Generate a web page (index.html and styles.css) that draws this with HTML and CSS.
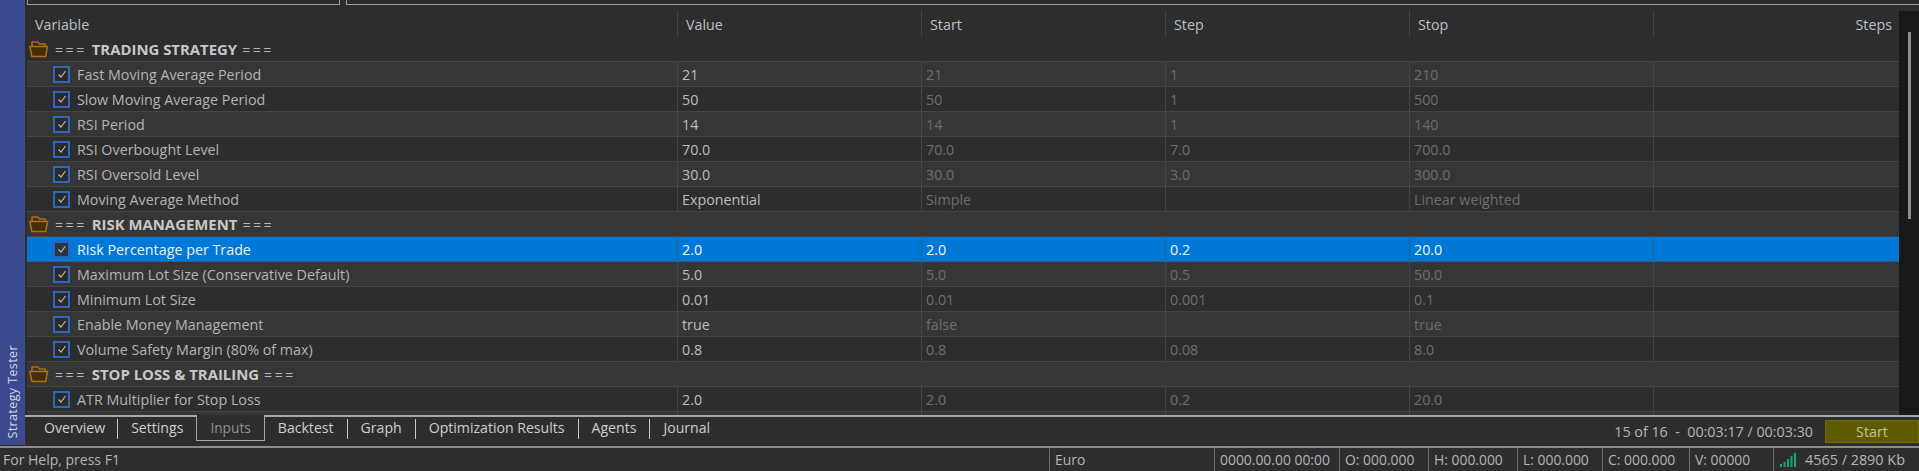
FILE: index.html
```html
<!DOCTYPE html>
<html lang="en">
<head>
<meta charset="utf-8">
<title>Strategy Tester</title>
<link rel="stylesheet" href="styles.css">
</head>
<body>
<div class="app">
  <div class="main">
    <aside class="rail"><span class="rail-label">Strategy Tester</span></aside>
    <div class="panel">
      <div class="filters">
        <div class="filter filter-a"></div>
        <div class="filter filter-b"></div>
      </div>
      <div class="body">
        <div class="table">
          <div class="head">
            <div class="hc hc-first">Variable</div>
            <div class="hc">Value</div>
            <div class="hc">Start</div>
            <div class="hc">Step</div>
            <div class="hc">Stop</div>
            <div class="hc hc-last">Steps</div>
          </div>
          <div class="rows">
            <div class="row group"><svg class="folder" viewBox="0 0 20 18"><path d="M3 6V2h6l1.500 2H16v2" fill="none" stroke="#b0700f" stroke-width="1.500"/><path d="M1 6.500h17.500l-1.800 10H2.800z" fill="#432f07" stroke="#b0700f" stroke-width="1.500"/></svg><span class="eq">===</span><b>TRADING STRATEGY</b><span class="eq">===</span></div>
            <div class="row param"><div class="c c-name"><span class="check"><svg viewBox="0 0 10 10"><path d="M1.500 5.500l2.500 2.500 4.500-6" fill="none" stroke="#b5b5b5" stroke-width="1.200"/></svg></span>Fast Moving Average Period</div><div class="c c-val">21</div><div class="c">21</div><div class="c">1</div><div class="c">210</div><div class="c"></div></div>
            <div class="row param"><div class="c c-name"><span class="check"><svg viewBox="0 0 10 10"><path d="M1.500 5.500l2.500 2.500 4.500-6" fill="none" stroke="#b5b5b5" stroke-width="1.200"/></svg></span>Slow Moving Average Period</div><div class="c c-val">50</div><div class="c">50</div><div class="c">1</div><div class="c">500</div><div class="c"></div></div>
            <div class="row param"><div class="c c-name"><span class="check"><svg viewBox="0 0 10 10"><path d="M1.500 5.500l2.500 2.500 4.500-6" fill="none" stroke="#b5b5b5" stroke-width="1.200"/></svg></span>RSI Period</div><div class="c c-val">14</div><div class="c">14</div><div class="c">1</div><div class="c">140</div><div class="c"></div></div>
            <div class="row param"><div class="c c-name"><span class="check"><svg viewBox="0 0 10 10"><path d="M1.500 5.500l2.500 2.500 4.500-6" fill="none" stroke="#b5b5b5" stroke-width="1.200"/></svg></span>RSI Overbought Level</div><div class="c c-val">70.0</div><div class="c">70.0</div><div class="c">7.0</div><div class="c">700.0</div><div class="c"></div></div>
            <div class="row param"><div class="c c-name"><span class="check"><svg viewBox="0 0 10 10"><path d="M1.500 5.500l2.500 2.500 4.500-6" fill="none" stroke="#b5b5b5" stroke-width="1.200"/></svg></span>RSI Oversold Level</div><div class="c c-val">30.0</div><div class="c">30.0</div><div class="c">3.0</div><div class="c">300.0</div><div class="c"></div></div>
            <div class="row param"><div class="c c-name"><span class="check"><svg viewBox="0 0 10 10"><path d="M1.500 5.500l2.500 2.500 4.500-6" fill="none" stroke="#b5b5b5" stroke-width="1.200"/></svg></span>Moving Average Method</div><div class="c c-val">Exponential</div><div class="c">Simple</div><div class="c"></div><div class="c">Linear weighted</div><div class="c"></div></div>
            <div class="row group"><svg class="folder" viewBox="0 0 20 18"><path d="M3 6V2h6l1.500 2H16v2" fill="none" stroke="#b0700f" stroke-width="1.500"/><path d="M1 6.500h17.500l-1.800 10H2.800z" fill="#432f07" stroke="#b0700f" stroke-width="1.500"/></svg><span class="eq">===</span><b>RISK MANAGEMENT</b><span class="eq">===</span></div>
            <div class="row param selected"><div class="c c-name"><span class="check"><svg viewBox="0 0 10 10"><path d="M1.500 5.500l2.500 2.500 4.500-6" fill="none" stroke="#b5b5b5" stroke-width="1.200"/></svg></span>Risk Percentage per Trade</div><div class="c c-val">2.0</div><div class="c">2.0</div><div class="c">0.2</div><div class="c">20.0</div><div class="c"></div></div>
            <div class="row param"><div class="c c-name"><span class="check"><svg viewBox="0 0 10 10"><path d="M1.500 5.500l2.500 2.500 4.500-6" fill="none" stroke="#b5b5b5" stroke-width="1.200"/></svg></span>Maximum Lot Size (Conservative Default)</div><div class="c c-val">5.0</div><div class="c">5.0</div><div class="c">0.5</div><div class="c">50.0</div><div class="c"></div></div>
            <div class="row param"><div class="c c-name"><span class="check"><svg viewBox="0 0 10 10"><path d="M1.500 5.500l2.500 2.500 4.500-6" fill="none" stroke="#b5b5b5" stroke-width="1.200"/></svg></span>Minimum Lot Size</div><div class="c c-val">0.01</div><div class="c">0.01</div><div class="c">0.001</div><div class="c">0.1</div><div class="c"></div></div>
            <div class="row param"><div class="c c-name"><span class="check"><svg viewBox="0 0 10 10"><path d="M1.500 5.500l2.500 2.500 4.500-6" fill="none" stroke="#b5b5b5" stroke-width="1.200"/></svg></span>Enable Money Management</div><div class="c c-val">true</div><div class="c">false</div><div class="c"></div><div class="c">true</div><div class="c"></div></div>
            <div class="row param"><div class="c c-name"><span class="check"><svg viewBox="0 0 10 10"><path d="M1.500 5.500l2.500 2.500 4.500-6" fill="none" stroke="#b5b5b5" stroke-width="1.200"/></svg></span>Volume Safety Margin (80% of max)</div><div class="c c-val">0.8</div><div class="c">0.8</div><div class="c">0.08</div><div class="c">8.0</div><div class="c"></div></div>
            <div class="row group"><svg class="folder" viewBox="0 0 20 18"><path d="M3 6V2h6l1.500 2H16v2" fill="none" stroke="#b0700f" stroke-width="1.500"/><path d="M1 6.500h17.500l-1.800 10H2.800z" fill="#432f07" stroke="#b0700f" stroke-width="1.500"/></svg><span class="eq">===</span><b>STOP LOSS &amp; TRAILING</b><span class="eq">===</span></div>
            <div class="row param"><div class="c c-name"><span class="check"><svg viewBox="0 0 10 10"><path d="M1.500 5.500l2.500 2.500 4.500-6" fill="none" stroke="#b5b5b5" stroke-width="1.200"/></svg></span>ATR Multiplier for Stop Loss</div><div class="c c-val">2.0</div><div class="c">2.0</div><div class="c">0.2</div><div class="c">20.0</div><div class="c"></div></div>
            <div class="row param"><div class="c c-name"></div><div class="c"></div><div class="c"></div><div class="c"></div><div class="c"></div><div class="c"></div></div>
          </div>
        </div>
        <div class="scrollbar"><div class="thumb"></div></div>
      </div>
      <div class="tabbar">
        <nav class="tabs">
          <span class="tab">Overview</span>
          <span class="tab">Settings</span>
          <span class="tab tab-active">Inputs</span>
          <span class="tab">Backtest</span>
          <span class="tab">Graph</span>
          <span class="tab">Optimization Results</span>
          <span class="tab">Agents</span>
          <span class="tab tab-end">Journal</span>
        </nav>
        <div class="progress">15 of 16&nbsp; -&nbsp; 00:03:17 / 00:03:30</div>
        <button class="start" type="button">Start</button>
      </div>
    </div>
  </div>
  <footer class="status">
    <div class="s s-help">For Help, press F1</div>
    <div class="s s-euro">Euro</div>
    <div class="s s-date">0000.00.00 00:00</div>
    <div class="s s-o">O: 000.000</div>
    <div class="s s-o">H: 000.000</div>
    <div class="s s-l">L: 000.000</div>
    <div class="s s-c">C: 000.000</div>
    <div class="s s-v">V: 00000</div>
    <div class="s s-net"><svg class="bars" viewBox="0 0 18 14"><path d="M1 14v-3M4.500 14v-5M8 14V6M11.500 14V3M15 14V0" stroke="#12a86b" stroke-width="2" fill="none"/></svg>4565 / 2890 Kb</div>
  </footer>
</div>
</body>
</html>
```
FILE: styles.css
```css
* { box-sizing: border-box; }
html, body { margin: 0; padding: 0; background: #2d2d2d; }
body { font-family: "Open Sans", "Noto Sans", sans-serif; font-size: 14.3px; color: #c4c4c4; overflow: hidden; }
.app { width: 1919px; height: 471px; display: flex; flex-direction: column; overflow: hidden; }
.main { height: 446px; display: flex; }
.rail { width: 25px; height: 445px; background: #3b4a8f; display: flex; align-items: flex-end; justify-content: center; padding-bottom: 6px; flex: none; }
.rail-label { writing-mode: vertical-rl; transform: rotate(180deg); color: #d5d8e8; font-size: 12.5px; letter-spacing: .4px; }
.panel { flex: 1; display: flex; flex-direction: column; min-width: 0; }
.filters { height: 5px; display: flex; gap: 6px; padding-left: 2px; overflow: hidden; flex: none; }
.filter { height: 5px; border: 1px solid #a0a0a0; border-top: 0; }
.filter-a { width: 313px; }
.filter-b { flex: 1; border-right: 0; }
.body { height: 410px; display: flex; flex: none; }
.table { width: 1874px; padding-left: 2px; overflow: hidden; flex: none; }
.head { height: 32px; display: grid; grid-template-columns: 650px 244px 244px 244px 244px 246px; padding-top: 6px; color: #b9c0c8; }
.hc { height: 25px; line-height: 28px; padding-left: 8px; border-left: 1px solid #444; }
.hc-first { border-left: 0; padding-left: 8px; }
.hc-last { text-align: right; padding-right: 7px; padding-left: 0; }
.rows { height: 378px; overflow: hidden; }
.row { height: 25px; border-bottom: 1px solid #454545; background: #2d2d2d; }
.row:nth-child(even) { background: #363636; }
.group { display: flex; align-items: center; padding-left: 2px; color: #b4b4b4; }
.group b { color: #c8c8c8; font-size: 14.9px; font-weight: 700; margin: 0 5px; white-space: nowrap; }
.eq { letter-spacing: 2.4px; }
.folder { width: 20px; height: 18px; margin-right: 6px; flex: none; }
.param { display: grid; grid-template-columns: 650px 244px 244px 244px 244px 246px; color: #6d6d6d; }
.c { line-height: 25px; padding-left: 4px; border-left: 1px solid #454545; overflow: hidden; white-space: nowrap; }
.c-name { border-left: 0; padding-left: 26px; color: #b4b4b4; display: flex; align-items: center; gap: 7px; }
.c-val { color: #bdbdbd; }
.check { width: 17px; height: 17px; border: 2px solid #2c68c2; background: #2b2b2b; display: flex; align-items: center; justify-content: center; flex: none; }
.check svg { width: 10px; height: 10px; }
.selected { background: #0078d7 !important; color: #f2f2f2; border-bottom-color: #3a5c80; }
.selected .c { color: #f4f4f4; border-left-color: #2a5f8f; }
.selected .c-name { color: #f0f0f0; }
.selected .check { background: #2d3340; border-color: #2c62c0; }
.scrollbar { flex: 1; background: #181818; margin-top: 6px; padding-top: 21px; padding-left: 9px; }
.thumb { width: 3px; height: 187px; background: #8c8c8c; }
.tabbar { height: 31px; display: flex; align-items: center; border-top: 2px solid #a8a8a8; flex: none; }
.tabs { display: flex; flex: 1; height: 29px; align-items: flex-start; padding-left: 5px; font-size: 14.1px; }
.tab { height: 20px; margin-top: 2px; padding: 0 13px; line-height: 18px; border-right: 1px solid #c8c8c8; color: #cfcfcf; }
.tab:first-child { padding-left: 14px; padding-right: 12px; }
.tab-end { border-right: 0; }
.tab-active { height: 26px; margin-top: -2px; padding-top: 4px; background: #2d2d2d; border: 1px solid #a8a8a8; border-top: 0; color: #8e9296; margin-left: -1px; font-size: 13.7px; }
.progress { margin-right: 12px; color: #b6b6b6; }
.start { width: 94px; height: 23px; background: #5e5a00; border: 1px solid #736f05; color: #c6c29a; font: inherit; padding: 0; }
.status { height: 25px; display: flex; border-top: 2px solid #8c8c8c; background: #2d2d2d; color: #b6b6b6; font-size: 13.9px; flex: none; }
.s { padding-left: 5px; border-left: 1px solid #6a6a6a; line-height: 24px; white-space: nowrap; flex: none; }
.s-help { width: 1049px; border-left: 0; padding-left: 3px; font-size: 14px; }
.s-euro { width: 165px; }
.s-date { width: 125px; }
.s-o { width: 89px; }
.s-l { width: 85px; }
.s-c { width: 87px; }
.s-v { width: 84px; }
.s-net { flex: 1; display: flex; align-items: center; gap: 7px; padding-left: 6px; font-size: 14.4px; }
.bars { width: 18px; height: 14px; }
```
